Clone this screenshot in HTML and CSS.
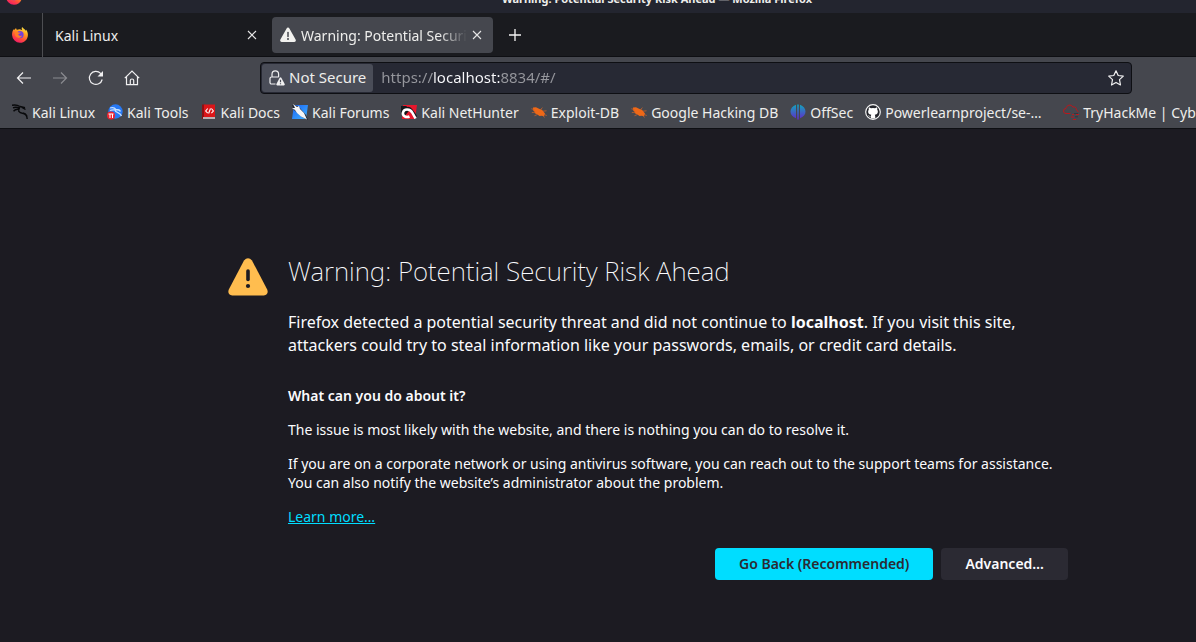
FILE: index.html
```html
<!DOCTYPE html>
<html lang="en">
<head>
<meta charset="utf-8">
<title>Warning: Potential Security Risk Ahead</title>
<link rel="stylesheet" href="styles.css">
</head>
<body>
<svg class="defs" width="0" height="0" aria-hidden="true">
  <defs>
    <linearGradient id="flame" x1="0.8" y1="0" x2="0.3" y2="1">
      <stop offset="0" stop-color="#fff04a"/><stop offset="0.35" stop-color="#ffa21f"/><stop offset="0.7" stop-color="#ff4a3c"/><stop offset="1" stop-color="#f0176b"/>
    </linearGradient>
    <linearGradient id="sec" x1="0" y1="0" x2="0" y2="1">
      <stop offset="0" stop-color="#12a5bd"/><stop offset="1" stop-color="#6328c8"/>
    </linearGradient>
    <linearGradient id="blue" x1="0" y1="0" x2="1" y2="1">
      <stop offset="0" stop-color="#1b62f2"/><stop offset="1" stop-color="#3fb2ff"/>
    </linearGradient>
    <symbol id="firefox" viewBox="0 0 16 16">
      <path fill="url(#flame)" d="M10.200 0c-.7 1-.7 2.200.1 3.200C8.500 2 6.700 2 5.300 2.800 4.500 2.500 4.100 1.700 4.200.9 3.300 1.400 2.600 2.200 2.200 3.100L1.700 2.300C.5 3.900-.1 6 .1 8.200A8 8 0 0 0 8 15.800c4.400 0 7.900-3.400 7.900-7.800 0-2.700-.8-4.300-2-5.600l.2 1.500C12.800 1.900 11 1.700 10.200 0z"/>
      <circle cx="8" cy="7.700" r="3.600" fill="#7440dc"/>
      <path fill="#ff7d26" d="M2.600 5.200c1.700-.8 3-.6 4.100.2l2 .1c.1.900-1.900 1-2.300 1.700-.2 1.300 2 2.300 3.700 1.400-.8 2.600-4.500 3.200-6.300 1C3 8.600 2.800 7 2.600 5.200z"/>
    </symbol>
    <symbol id="warn" viewBox="0 0 16 16">
      <path fill="#f2f2ef" d="M6.600 1.400a1.600 1.600 0 0 1 2.800 0l6.200 11.200a1.600 1.600 0 0 1-1.400 2.400H1.800A1.600 1.600 0 0 1 .4 12.600z"/>
      <path stroke="#46484f" stroke-width="1.500" stroke-linecap="round" d="M8 5.500v4"/><circle cx="8" cy="12" r="1" fill="#46484f"/>
    </symbol>
    <symbol id="close" viewBox="0 0 10 10"><path d="M1 1l8 8M9 1L1 9" stroke="#e6e6e6" stroke-width="1.100"/></symbol>
    <symbol id="bug" viewBox="0 0 16 16">
      <path fill="#ef6817" d="M2 3.500L5 3.300 8.500 5 11 5.800 12.600 7.800 14 9.500 13 12.200 10.500 11.800 8.500 12 6 10.300 3.800 9.300 3.400 7.500 2 6.200z"/>
      <path fill="none" stroke="#c8622a" stroke-width=".8" d="M.3 4.800l3 .7M.8 8.700l3.500-.7M9.500 5.500l2-1.800M12 7.200l3.500-.4M13 10.500l2.800 1M6.500 10.500l-3 1.200M12 11.500l1.500 2"/>
    </symbol>
  </defs>
</svg>

<header class="browser">
  <div class="titlebar">
    <svg class="title-icon" viewBox="0 0 16 16"><use href="#firefox"/></svg>
    <span class="window-title">Warning: Potential Security Risk Ahead — Mozilla Firefox</span>
  </div>

  <div class="tabs">
    <button class="pinned" aria-label="Firefox"><svg class="icon" viewBox="0 0 16 16"><use href="#firefox"/></svg></button>
    <div class="tab"><span class="tab-label">Kali Linux</span><button class="tab-close" aria-label="Close Kali Linux"><svg viewBox="0 0 10 10"><use href="#close"/></svg></button></div>
    <div class="tab active"><svg class="icon" viewBox="0 0 16 16"><use href="#warn"/></svg><span class="tab-label fade">Warning: Potential Security Risk Ahead</span><button class="tab-close" aria-label="Close tab"><svg viewBox="0 0 10 10"><use href="#close"/></svg></button></div>
    <button class="new-tab" aria-label="New tab"><svg viewBox="0 0 14 14"><path d="M7 1v12M1 7h12" stroke="#f4f4f4" stroke-width="1.300"/></svg></button>
  </div>

  <nav class="toolbar" aria-label="Navigation">
    <div class="nav-buttons">
      <button aria-label="Back"><svg class="icon line" viewBox="0 0 16 16"><path d="M15 8H1.500M7 2.500L1.500 8 7 13.500"/></svg></button>
      <button aria-label="Forward" disabled><svg class="icon line" viewBox="0 0 16 16"><path d="M1 8h13.500M9 2.500L14.500 8 9 13.500"/></svg></button>
      <button aria-label="Reload"><svg class="icon line" viewBox="0 0 16 16"><path d="M14.200 9.500A6.500 6.500 0 1 1 12.600 3.400L14 4.800"/><path class="solid" d="M15 1v5.500H9.500z"/></svg></button>
      <button aria-label="Home"><svg class="icon line" viewBox="0 0 16 16"><path d="M.8 8.200L8 1l7.200 7.200M2.500 6.700v8h11v-8M6.300 14.500v-4q0-1.500 1.700-1.500t1.700 1.500v4"/></svg></button>
    </div>
    <div class="urlbar">
      <button class="identity"><svg class="icon line" viewBox="0 0 16 16"><path d="M3 7V4.200a3.300 3.300 0 0 1 6.600 0V7M6.500 14H2.500A1.500 1.500 0 0 1 1 12.500v-4A1.500 1.500 0 0 1 2.500 7H9.800"/><path class="solid" d="M10.700 7.800q.8-1 1.600 0l3.400 6.200q.4 1.200-.8 1.500H8.200q-1.200-.3-.8-1.500z"/><path stroke="#4a4d58" d="M11.500 9.800v2.500M11.500 13.300v1"/></svg>Not Secure</button>
      <input class="address" type="text" aria-label="Address" value="https://localhost:8834/#/">
      <button class="star" aria-label="Bookmark this page"><svg class="icon line" viewBox="0 0 16 16"><path stroke-linejoin="round" d="M8 .8l2.200 4.700 5.100.6-3.800 3.500 1 5.400L8 12.400 3.500 15l1-5.400L.7 6.100l5.100-.6z"/></svg></button>
    </div>
  </nav>

  <nav class="bookmarks" aria-label="Bookmarks">
    <a href="#"><svg class="icon" viewBox="0 0 16 16"><path fill="none" stroke="#08090b" stroke-width="1.400" d="M0 1.300c3-.6 5.500-.3 8 1.200M1 3.800c2-.8 4.500-.6 7 .2M1.500 7.200c1.500-1.700 3.500-2.200 6-1.700M8 2.500l5 1.300M7.500 4.200c-2 3 0 4.700 2.800 5 2.500.3 4.700 1.300 4.900 5.800M10 3.500l3.500 2M11 9c2 .3 3 1.300 4 3"/></svg>Kali Linux</a>
    <a href="#"><svg class="icon" viewBox="0 0 16 16"><circle cx="8.500" cy="7.500" r="7.200" fill="#2779f5"/><path fill="none" stroke="#c8e1ff" stroke-width="1.300" d="M3 4c3-1 5 0 6 1.500M3 6.500c2-1 4-.5 6-1 2 0 4 1 4.500 2M8 6c0 3 5 1.500 6.500 6"/><circle cx="4" cy="11.500" r="4" fill="#ed2330"/><path fill="none" stroke="#fff" d="M1.500 10h5M3 10v4M5.500 10v4"/></svg>Kali Tools</a>
    <a href="#"><svg class="icon" viewBox="0 0 16 16"><path fill="#8e1013" d="M1 .5h3v14.500H1z"/><path fill="#db1518" d="M3 .5h11v12.500H3z"/><path fill="#bbb0b2" d="M2 13h12v2H2z"/><path fill="none" stroke="#fff" stroke-width="1.100" d="M6.700 4.500L4.700 7l2 2.200M10.400 4.500L12.400 7l-2 2.200M9.500 4.500L7.600 9.500"/></svg>Kali Docs</a>
    <a href="#"><svg class="icon" viewBox="0 0 16 16"><path fill="url(#blue)" d="M2 1h14l-2 14H0z"/><path fill="#20242d" d="M0 1l6 1 8 9 2 5-6-3L2 6z"/><path fill="#f4f5f7" d="M1 0l4 3 2-1 1 3 4 4 3 6.500-6-3L5 9 3 6 0 4l3 0z"/></svg>Kali Forums</a>
    <a href="#"><svg class="icon" viewBox="0 0 16 16"><path fill="#e8172c" d="M2 1h14l-2 14H1z"/><path fill="#15171b" d="M0 2l5 0 5 3-3 3-4 5-3-5z"/><path fill="none" stroke="#15171b" stroke-width="1.500" d="M7 3.500c3 0 5 3.500 8.500 9"/><path fill="none" stroke="#fff" stroke-width="2.600" d="M14.500 14.500L11.500 9C9 4.500 3 4.500 2 8.500c-.7 3.500 3 5.500 6.500 4"/></svg>Kali NetHunter</a>
    <a href="#"><svg class="icon" viewBox="0 0 16 16"><use href="#bug"/></svg>Exploit-DB</a>
    <a href="#"><svg class="icon" viewBox="0 0 16 16"><use href="#bug"/></svg>Google Hacking DB</a>
    <a href="#"><svg class="icon" viewBox="0 0 16 16"><path fill="url(#sec)" d="M6 .7v13.500C2.500 13 .5 10.500.5 7.500S2.500 2 6 .7zM7.200.5h1.600v15H7.200zM10 .7c3.500 1.300 5.500 3.800 5.500 6.800S13.500 13 10 14.200z"/></svg>OffSec</a>
    <a class="truncated" href="#"><svg class="icon" viewBox="0 0 16 16"><circle cx="8" cy="8" r="7.300" fill="#24262c" stroke="#f4f4f4" stroke-width="1.200"/><path fill="#fff" d="M4 3.200l2 1q2-.5 4 0l2-1q.6 1.300.2 2.300c1.500 2.500.3 5-2.400 5.300.5.700.5 2 .5 3.800H5.800v-2C4 13 3.800 12 3 11.200c1.200-.2 1.600 1.500 2.900 1.100 0-.7.100-1 .4-1.500C3.500 10.500 2.300 8 3.800 5.500q-.4-1 .2-2.300z"/></svg>Powerlearnproject/se-…</a>
    <a href="#"><svg class="icon" viewBox="0 0 16 16"><path fill="none" stroke="#bb171c" stroke-width="1" d="M7.500 9.500H3A2.500 2.500 0 0 1 3 4.500C3.200 1 8.300-.3 9.800 3c2.500-.5 4 1.200 3.500 3 1 .3 1.800.9 1.800 2"/><path stroke="#bb171c" d="M9 10.500h2M13 10.500h3M8 13h3M10 15.500h3"/><path stroke="#343740" d="M11 9.500h4M12 12.800h3"/></svg>TryHackMe | Cyber Security</a>
  </nav>
</header>

<main class="page">
  <section class="notice">
    <svg class="alert" viewBox="0 0 40 38" aria-hidden="true"><path fill="#ffbd4f" d="M16 2.500q4-4.600 8 0l15.200 29q1.800 5-3.400 6H4.200q-5.200-1-3.400-6z"/><path stroke="#1c1b22" stroke-width="3.600" stroke-linecap="round" d="M20 13v8.500"/><circle cx="20" cy="28" r="2.100" fill="#1c1b22"/></svg>
    <div class="copy">
      <h1>Warning: Potential Security Risk Ahead</h1>
      <p class="lead">Firefox detected a potential security threat and did not continue to <b>localhost</b>. If you visit this site, attackers could try to steal information like your passwords, emails, or credit card details.</p>
      <h2>What can you do about it?</h2>
      <p>The issue is most likely with the website, and there is nothing you can do to resolve it.</p>
      <p>If you are on a corporate network or using antivirus software, you can reach out to the support teams for assistance. You can also notify the website’s administrator about the problem.</p>
      <p><a class="learn" href="#">Learn more…</a></p>
      <div class="actions">
        <button class="primary">Go Back (Recommended)</button>
        <button class="secondary">Advanced…</button>
      </div>
    </div>
  </section>
</main>
</body>
</html>
```
FILE: styles.css
```css
* { box-sizing: border-box; }
body {
  margin: 0;
  min-height: 100vh;
  background: #1c1b22;
  color: #fbfbfe;
  font: 14px/19px "Noto Sans", "Open Sans", sans-serif;
  overflow-x: hidden;
}
button { margin: 0; padding: 0; border: 0; background: none; color: inherit; font: inherit; }
svg { display: block; flex: none; }
.defs { position: absolute; }
.icon { width: 16px; height: 16px; }
.line { fill: none; stroke: #f0f0f1; stroke-width: 1.2; }
.line .solid { fill: #f0f0f1; stroke: none; }

.browser { background: #45474e; color: #eeeeec; border-bottom: 1px solid #0e0f13; }
.titlebar {
  display: flex;
  align-items: flex-end;
  height: 13px;
  padding: 0 0 6px 6px;
  overflow: hidden;
  background: #23252f;
}
.title-icon { width: 16px; height: 16px; margin-bottom: 2px; }
.window-title { flex: 1; padding-left: 96px; text-align: center; font-size: 11px; font-weight: 700; line-height: 16px; }

.tabs { display: flex; align-items: center; height: 44px; background: #1a1b1f; border-bottom: 1px solid #0e0f13; }
.pinned { display: flex; justify-content: center; align-items: center; width: 43px; height: 44px; padding-right: 2px; border-right: 1px solid #4d4e52; }
.tab { display: flex; align-items: center; gap: 5px; width: 221px; height: 36px; margin-left: 4px; padding: 0 11px 0 8px; border-radius: 4px; }
.tab.active { background: #45474e; }
.tab-label { flex: 1; padding-top: 2px; overflow: hidden; white-space: nowrap; }
.fade { mask-image: linear-gradient(to left, transparent, #000 28px); }
.tab-close { width: 10px; }
.tab-close svg { width: 10px; height: 10px; }
.new-tab { margin-left: 15px; }
.new-tab svg { width: 14px; height: 14px; }

.toolbar { display: flex; align-items: center; height: 41px; padding: 0 64px 0 16px; }
.nav-buttons { display: flex; gap: 20px; width: 244px; flex: none; }
.nav-buttons button:disabled { opacity: .4; }
.urlbar { display: flex; align-items: center; flex: 1; height: 32px; padding: 1px; border: 1px solid #0e0f13; border-radius: 4px; background: #272934; }
.identity { display: flex; align-items: center; gap: 4px; flex: none; height: 28px; padding: 0 7px; border-radius: 3px; background: #4a4d58; font-size: 15px; }
.address {
  flex: 1;
  min-width: 0;
  height: 28px;
  padding: 0 8px 2px;
  border: 0;
  font: inherit;
  font-size: 15px;
  color: transparent;
  background: linear-gradient(to right, #96979d 60px, #fbfbfe 60px 127px, #96979d 127px) text;
}
.star { margin-right: 6px; }

.bookmarks { display: flex; align-items: center; gap: 12px; height: 30px; padding: 0 0 2px 12px; overflow: hidden; }
.bookmarks a { display: flex; align-items: center; gap: 4px; flex: none; color: inherit; text-decoration: none; white-space: nowrap; }
.bookmarks .truncated { width: 186px; }

.page { display: flex; justify-content: center; padding: 124px 20px 40px 120px; }
.notice { display: flex; gap: 20px; width: 100%; max-width: 840px; }
.alert { width: 40px; height: 38px; margin-top: 5px; }
.copy { flex: 1; }
h1 { margin: 0 0 22px; font-size: 26px; font-weight: 200; line-height: 36px; }
.lead { margin: 0 0 29px; font-size: 16px; line-height: 23px; }
h2 { margin: 0; font-size: 14px; font-weight: 600; line-height: 19px; }
p { margin: 15px 0 0; }
.learn { color: #00ddff; }
.actions { display: flex; justify-content: flex-end; gap: 8px; margin-top: 22px; }
.actions button { height: 32px; padding: 0 24px 2px; border-radius: 4px; font-weight: 600; }
.primary { background: #00ddff; color: #2b2a33; }
.secondary { background: #2b2a33; }
```
